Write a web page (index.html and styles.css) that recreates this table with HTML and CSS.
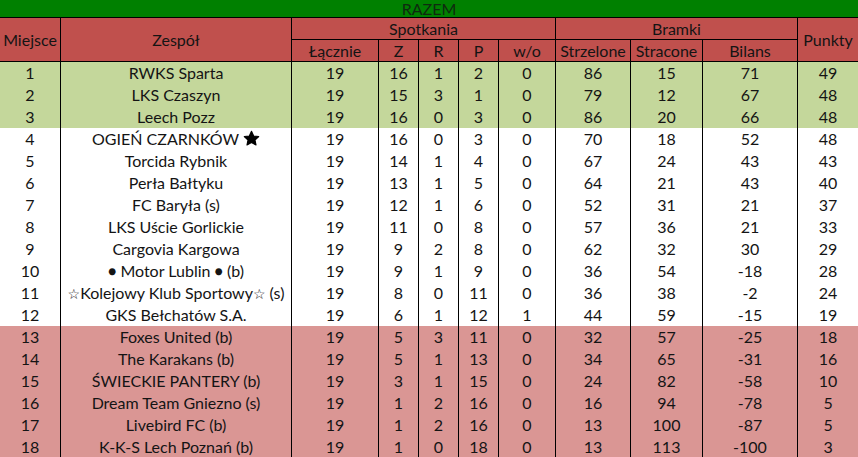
FILE: index.html
```html
<!DOCTYPE html>
<html lang="pl">
<head>
<meta charset="utf-8">
<title>Tabela - RAZEM</title>
<link rel="stylesheet" href="styles.css">
</head>
<body>
<table class="standings">
  <colgroup>
    <col class="c-pos"><col class="c-team"><col class="c-tot"><col class="c-n"><col class="c-n"><col class="c-n"><col class="c-wo"><col class="c-gf"><col class="c-ga"><col class="c-gd"><col class="c-pts">
  </colgroup>
  <thead>
    <tr class="title"><th colspan="11">RAZEM</th></tr>
    <tr class="head">
      <th rowspan="2" class="first">Miejsce</th>
      <th rowspan="2">Zespół</th>
      <th colspan="5">Spotkania</th>
      <th colspan="3">Bramki</th>
      <th rowspan="2">Punkty</th>
    </tr>
    <tr class="head sub">
      <th>Łącznie</th><th>Z</th><th>R</th><th>P</th><th>w/o</th>
      <th>Strzelone</th><th>Stracone</th><th>Bilans</th>
    </tr>
  </thead>
  <tbody>
    <tr class="promo"><td class="first">1</td><td>RWKS Sparta</td><td>19</td><td>16</td><td>1</td><td>2</td><td>0</td><td>86</td><td>15</td><td>71</td><td>49</td></tr>
    <tr class="promo"><td class="first">2</td><td>LKS Czaszyn</td><td>19</td><td>15</td><td>3</td><td>1</td><td>0</td><td>79</td><td>12</td><td>67</td><td>48</td></tr>
    <tr class="promo"><td class="first">3</td><td>Leech Pozz</td><td>19</td><td>16</td><td>0</td><td>3</td><td>0</td><td>86</td><td>20</td><td>66</td><td>48</td></tr>
    <tr><td class="first">4</td><td>OGIEŃ CZARNKÓW <svg class="star" viewBox="0 0 24 24" width="17" height="17" aria-hidden="true"><path d="M12 1.8l3.1 6.6 7.1.8-5.3 4.9 1.5 7.1L12 17.6l-6.4 3.6 1.5-7.1L1.8 9.2l7.1-.8z" fill="#000" stroke="#000" stroke-width="1.6" stroke-linejoin="round"/></svg></td><td>19</td><td>16</td><td>0</td><td>3</td><td>0</td><td>70</td><td>18</td><td>52</td><td>48</td></tr>
    <tr><td class="first">5</td><td>Torcida Rybnik</td><td>19</td><td>14</td><td>1</td><td>4</td><td>0</td><td>67</td><td>24</td><td>43</td><td>43</td></tr>
    <tr><td class="first">6</td><td>Perła Bałtyku</td><td>19</td><td>13</td><td>1</td><td>5</td><td>0</td><td>64</td><td>21</td><td>43</td><td>40</td></tr>
    <tr><td class="first">7</td><td>FC Baryła (s)</td><td>19</td><td>12</td><td>1</td><td>6</td><td>0</td><td>52</td><td>31</td><td>21</td><td>37</td></tr>
    <tr><td class="first">8</td><td>LKS Uście Gorlickie</td><td>19</td><td>11</td><td>0</td><td>8</td><td>0</td><td>57</td><td>36</td><td>21</td><td>33</td></tr>
    <tr><td class="first">9</td><td>Cargovia Kargowa</td><td>19</td><td>9</td><td>2</td><td>8</td><td>0</td><td>62</td><td>32</td><td>30</td><td>29</td></tr>
    <tr><td class="first">10</td><td><span class="dot">●</span> Motor Lublin <span class="dot">●</span> (b)</td><td>19</td><td>9</td><td>1</td><td>9</td><td>0</td><td>36</td><td>54</td><td>-18</td><td>28</td></tr>
    <tr><td class="first">11</td><td><span class="wstar">☆</span>Kolejowy Klub Sportowy<span class="wstar">☆</span> (s)</td><td>19</td><td>8</td><td>0</td><td>11</td><td>0</td><td>36</td><td>38</td><td>-2</td><td>24</td></tr>
    <tr><td class="first">12</td><td>GKS Bełchatów S.A.</td><td>19</td><td>6</td><td>1</td><td>12</td><td>1</td><td>44</td><td>59</td><td>-15</td><td>19</td></tr>
    <tr class="releg"><td class="first">13</td><td>Foxes United (b)</td><td>19</td><td>5</td><td>3</td><td>11</td><td>0</td><td>32</td><td>57</td><td>-25</td><td>18</td></tr>
    <tr class="releg"><td class="first">14</td><td>The Karakans (b)</td><td>19</td><td>5</td><td>1</td><td>13</td><td>0</td><td>34</td><td>65</td><td>-31</td><td>16</td></tr>
    <tr class="releg"><td class="first">15</td><td>ŚWIECKIE PANTERY (b)</td><td>19</td><td>3</td><td>1</td><td>15</td><td>0</td><td>24</td><td>82</td><td>-58</td><td>10</td></tr>
    <tr class="releg"><td class="first">16</td><td>Dream Team Gniezno (s)</td><td>19</td><td>1</td><td>2</td><td>16</td><td>0</td><td>16</td><td>94</td><td>-78</td><td>5</td></tr>
    <tr class="releg"><td class="first">17</td><td>Livebird FC (b)</td><td>19</td><td>1</td><td>2</td><td>16</td><td>0</td><td>13</td><td>100</td><td>-87</td><td>5</td></tr>
    <tr class="releg"><td class="first">18</td><td>K-K-S Lech Poznań (b)</td><td>19</td><td>1</td><td>0</td><td>18</td><td>0</td><td>13</td><td>113</td><td>-100</td><td>3</td></tr>
  </tbody>
</table>
</body>
</html>
```

FILE: styles.css
```css
html, body {
  margin: 0;
  padding: 0;
  background: #ffffff;
}

.standings {
  width: 858px;
  table-layout: fixed;
  border-collapse: separate;
  border-spacing: 0;
  font-family: Lato, "Liberation Sans", sans-serif;
  font-size: 16px;
  color: #141414;
}

.c-pos { width: 60px; }
.c-team { width: 231px; }
.c-tot { width: 87px; }
.c-n { width: 40px; }
.c-wo { width: 57px; }
.c-gf { width: 75px; }
.c-ga { width: 72px; }
.c-gd { width: 95px; }
.c-pts { width: 61px; }

.standings th,
.standings td {
  padding: 0;
  text-align: center;
  vertical-align: middle;
  font-weight: normal;
  white-space: nowrap;
  overflow: hidden;
  box-sizing: border-box;
  border-left: 1px solid #000;
}

.standings .first,
.standings .title th {
  border-left: none;
}

.title th {
  background: #008000;
  height: 18px;
  line-height: 16px;
  font-size: 16px;
  color: #0f2a0f;
  border-bottom: 1px solid #000;
}

.head th {
  background: #c0504d;
  height: 22px;
  line-height: 20px;
  border-bottom: 1px solid #000;
}

.standings td {
  height: 22px;
  line-height: 20px;
}

.promo td { background: #c4d79b; }
.releg td { background: #da9694; }

.star {
  vertical-align: -2px;
}

.dot {
  font-size: 14px;
  vertical-align: 1px;
}

.wstar {
  font-family: "DejaVu Sans", sans-serif;
  font-size: 14px;
}
```
